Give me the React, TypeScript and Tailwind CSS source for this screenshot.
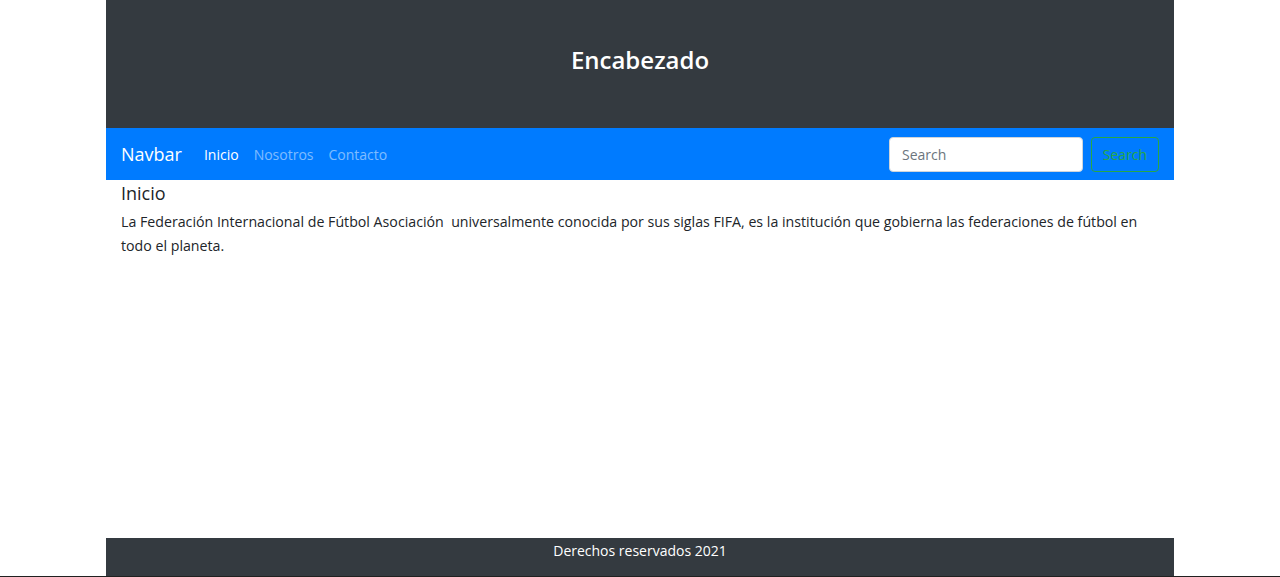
export default function App() {
  return (
    <div className="flex min-h-[577px] flex-col bg-white font-['Open_Sans',sans-serif] text-[#212529]">
      <div className="mx-auto flex w-[1068px] flex-1 flex-col">
        <header className="flex h-[128px] items-center justify-center bg-[#343a40] pb-[9px]">
          <h1 className="text-[24px] font-semibold text-white">Encabezado</h1>
        </header>

        <nav className="flex h-[52px] items-center bg-[#007bff] px-[15px]">
          <a className="mr-[22px] text-[18px] text-white">Navbar</a>
          <div className="flex items-center gap-[15px] text-[14px]">
            <a className="text-white">Inicio</a>
            <a className="text-white/50">Nosotros</a>
            <a className="text-white/50">Contacto</a>
          </div>
          <div className="ml-auto flex items-center gap-2">
            <input
              placeholder="Search"
              className="h-[35px] w-[194px] rounded-[4px] border border-[#ced4da] bg-white px-3 text-[14px] text-[#495057] placeholder:text-[#6c757d] outline-none"
            />
            <button className="h-[35px] w-[68px] rounded-[4px] border border-[#28a745] text-[14px] text-[#28a745]">
              Search
            </button>
          </div>
        </nav>

        <main className="flex-1 px-[15px] pt-[1px]">
          <h5 className="text-[18px] font-medium leading-[24px]">Inicio</h5>
          <p className="mt-[5px] text-[14.2px] leading-[24px]">
            La Federación Internacional de Fútbol Asociación&nbsp; universalmente conocida por sus siglas FIFA, es la institución que gobierna las federaciones de fútbol en todo el planeta.
          </p>
        </main>

        <footer className="flex h-[38px] items-start justify-center bg-[#343a40] pt-[2px] text-[14px] text-white">
          Derechos reservados 2021
        </footer>
      </div>
      <div className="h-[1px] bg-[#202020]" />
    </div>
  );
}
